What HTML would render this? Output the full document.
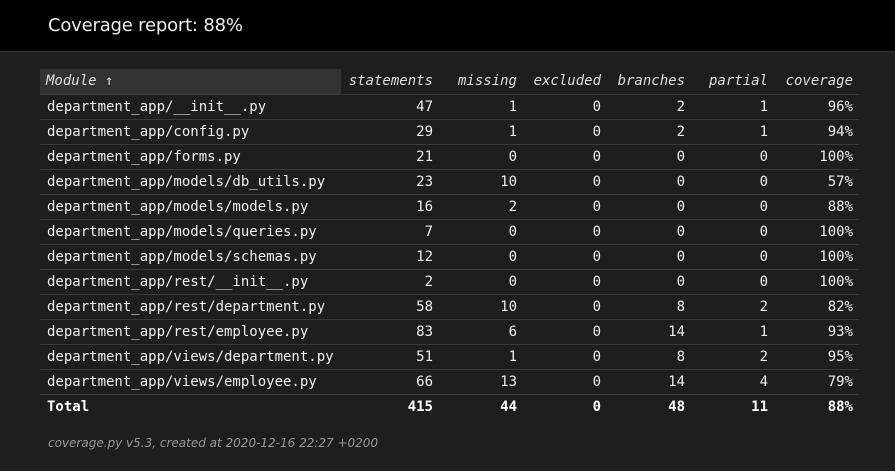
<!DOCTYPE html>
<html><head><meta charset="utf-8"><style>
*{margin:0;padding:0;box-sizing:border-box}
body{width:895px;height:471px;background:#1e1e1e;color:#eee;overflow:hidden;font-family:"DejaVu Sans Mono","Liberation Mono",monospace}
#hd{height:52px;background:#000;border-bottom:1px solid #333}
#hd h1{position:absolute;left:48px;top:15px;font:400 18px "DejaVu Sans","Liberation Sans",sans-serif;color:#eee;letter-spacing:-0.2px}
table{position:absolute;left:40px;top:69px;width:819px;border-collapse:collapse;font-size:14px}
th{font-style:italic;font-weight:400;color:#ddd;height:25px;text-align:right;padding-right:6px}
th.m{text-align:left;background:#333;padding-left:6px}
td{height:25px;text-align:right;padding-right:6px;border-top:1px solid #3a3a3a;color:#eee}
td.m{text-align:left;padding-left:7px}
tr.t td{font-weight:bold;color:#fff}
#ft{position:absolute;left:48px;top:436px;font:italic 12px "DejaVu Sans","Liberation Sans",sans-serif;color:#999}
</style></head><body>
<div id="hd"><h1>Coverage report: 88%</h1></div>
<table>
<colgroup><col style="width:301px"><col style="width:98px"><col style="width:84px"><col style="width:84px"><col style="width:84px"><col style="width:83px"><col style="width:85px"></colgroup>
<tr><th class="m">Module ↑</th><th>statements</th><th>missing</th><th>excluded</th><th>branches</th><th>partial</th><th>coverage</th></tr>
<tr><td class="m">department_app/__init__.py</td><td>47</td><td>1</td><td>0</td><td>2</td><td>1</td><td>96%</td></tr>
<tr><td class="m">department_app/config.py</td><td>29</td><td>1</td><td>0</td><td>2</td><td>1</td><td>94%</td></tr>
<tr><td class="m">department_app/forms.py</td><td>21</td><td>0</td><td>0</td><td>0</td><td>0</td><td>100%</td></tr>
<tr><td class="m">department_app/models/db_utils.py</td><td>23</td><td>10</td><td>0</td><td>0</td><td>0</td><td>57%</td></tr>
<tr><td class="m">department_app/models/models.py</td><td>16</td><td>2</td><td>0</td><td>0</td><td>0</td><td>88%</td></tr>
<tr><td class="m">department_app/models/queries.py</td><td>7</td><td>0</td><td>0</td><td>0</td><td>0</td><td>100%</td></tr>
<tr><td class="m">department_app/models/schemas.py</td><td>12</td><td>0</td><td>0</td><td>0</td><td>0</td><td>100%</td></tr>
<tr><td class="m">department_app/rest/__init__.py</td><td>2</td><td>0</td><td>0</td><td>0</td><td>0</td><td>100%</td></tr>
<tr><td class="m">department_app/rest/department.py</td><td>58</td><td>10</td><td>0</td><td>8</td><td>2</td><td>82%</td></tr>
<tr><td class="m">department_app/rest/employee.py</td><td>83</td><td>6</td><td>0</td><td>14</td><td>1</td><td>93%</td></tr>
<tr><td class="m">department_app/views/department.py</td><td>51</td><td>1</td><td>0</td><td>8</td><td>2</td><td>95%</td></tr>
<tr><td class="m">department_app/views/employee.py</td><td>66</td><td>13</td><td>0</td><td>14</td><td>4</td><td>79%</td></tr>
<tr class="t"><td class="m">Total</td><td>415</td><td>44</td><td>0</td><td>48</td><td>11</td><td>88%</td></tr>
</table>
<div id="ft">coverage.py v5.3, created at 2020-12-16 22:27 +0200</div>
</body></html>
